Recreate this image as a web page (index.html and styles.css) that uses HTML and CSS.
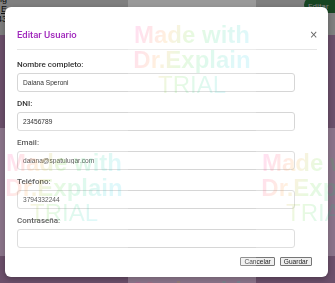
FILE: index.html
```html
<!DOCTYPE html>
<html lang="es">
<head>
    <meta charset="UTF-8">
    <meta name="viewport" content="width=device-width, initial-scale=1.0">
    <title>Editar Usuario</title>
    <link rel="stylesheet" href="styles.css">
</head>
<body>
    <div class="page">
        <div class="topbar">
            <div class="cut">
                <span>ing</span>
                <a href="#">E</a>
                <span>43</span>
            </div>
            <button class="btn-editar">Editar</button>
        </div>
    </div>

    <div class="backdrop">
        <div class="modal">
            <div class="modal-header">
                <h2>Editar Usuario</h2>
                <button class="close">&times;</button>
            </div>
            <form class="modal-body">
                <label for="nombre">Nombre completo:</label>
                <input type="text" id="nombre" value="Daiana Speroni">
                <label for="dni">DNI:</label>
                <input type="text" id="dni" value="23456789">
                <label for="email">Email:</label>
                <input type="text" id="email" value="daiana@spatulugar.com">
                <label for="telefono">Teléfono:</label>
                <input type="text" id="telefono" value="3794332244">
                <label for="password">Contraseña:</label>
                <input type="password" id="password">
            </form>
            <div class="modal-footer">
                <button>Cancelar</button>
                <button>Guardar</button>
            </div>
        </div>
    </div>

    <!-- marca de agua de la version de prueba -->
    <div class="wm wm-a"><div class="wm-text"><b>Made with</b><b>Dr.Explain</b><span>TRIAL</span></div></div>
    <div class="wm wm-b"><div class="wm-text"><b>Made with</b><b>Dr.Explain</b><span>TRIAL</span></div></div>
    <div class="wm wm-c"><div class="wm-text"><b>Made with</b><b>Dr.Explain</b><span>TRIAL</span></div></div>
    <div class="wm wm-d"><div class="wm-text"><b>Made with</b><b>Dr.Explain</b><span>TRIAL</span></div></div>
</body>
</html>
```

FILE: styles.css
```css
html, body {
    margin: 0;
    height: 100%;
    overflow: hidden;
}
body {
    background-color: #d9a0d7;
    font-family: Roboto, Arial, sans-serif;
}
.topbar {
    height: 35px;
    background-color: #fff;
    display: flex;
    justify-content: space-between;
    align-items: flex-start;
}
.cut {
    width: 7px;
    overflow: hidden;
    display: flex;
    flex-direction: column;
    align-items: flex-end;
    margin-top: -6px;
    font-family: "Liberation Sans", Arial, sans-serif;
    font-size: 9px;
    line-height: 10px;
    color: #222;
}
.cut span, .cut a {
    white-space: nowrap;
    color: #222;
}
.btn-editar {
    margin-top: -3px;
    width: 31px;
    height: 16px;
    padding: 3px 0 0 4px;
    border: none;
    border-radius: 8px 0 0 8px;
    background-color: #2f8a45;
    color: #fff;
    font-family: Roboto, sans-serif;
    font-size: 8px;
    line-height: 10px;
    text-align: left;
}

/* fondo oscuro del modal */
.backdrop {
    position: fixed;
    top: 0;
    left: 0;
    right: 0;
    bottom: 0;
    background-color: rgba(0, 0, 0, 0.5);
    padding: 7px 0 0 5px;
}
.modal {
    width: 323px;
    height: 270px;
    background-color: #fff;
    border-radius: 6px;
    box-shadow: 0 2px 6px rgba(0, 0, 0, 0.3);
    display: flex;
    flex-direction: column;
}
.modal-header {
    margin: 0 11px 0 12px;
    padding: 22px 0 8px;
    border-bottom: 1px solid #e6e6e6;
    display: flex;
    justify-content: space-between;
    align-items: center;
}
.modal-header h2 {
    margin: 0;
    font-size: 9.5px;
    line-height: 12px;
    font-weight: 500;
    color: #a028bc;
}
.close {
    border: none;
    background: none;
    padding: 0;
    margin-right: -1px;
    font-family: "DejaVu Sans", sans-serif;
    font-size: 10px;
    line-height: 12px;
    color: #666;
}
.modal-body {
    padding: 10px 0 0 12px;
    display: flex;
    flex-direction: column;
    align-items: flex-start;
}
.modal-body label {
    font-size: 8px;
    line-height: 10px;
    font-weight: 500;
    color: #333;
    margin-bottom: 3px;
}
.modal-body input {
    box-sizing: border-box;
    width: 278px;
    height: 19px;
    margin: 0 0 7px;
    padding: 0 5px;
    border: 1px solid #d6d6d6;
    border-radius: 3px;
    font-family: "Liberation Sans", Arial, sans-serif;
    font-size: 6.6px;
    color: #333;
    outline: none;
}
.modal-footer {
    margin-top: 2px;
    padding-right: 16px;
    display: flex;
    justify-content: flex-end;
    gap: 5px;
}
.modal-footer button {
    height: 9px;
    padding: 0 3px;
    border: 1px solid #767676;
    border-radius: 1px;
    background-color: #efefef;
    font-family: "Liberation Sans", Arial, sans-serif;
    font-size: 6.6px;
    line-height: 7px;
    color: #222;
}

/* marca de agua */
.wm {
    position: fixed;
    width: 128px;
    height: 128px;
    background-color: rgba(255, 255, 255, 0.2);
    pointer-events: none;
}
.wm-a { left: 128px; top: 0; }
.wm-b { left: 0; top: 128px; }
.wm-c { left: 128px; top: 256px; }
.wm-d { left: 256px; top: 128px; }
.wm-text {
    padding-top: 22px;
    display: flex;
    flex-direction: column;
    align-items: center;
    font-family: "Liberation Sans", Arial, sans-serif;
    font-size: 24px;
    line-height: 25px;
    white-space: nowrap;
    background: linear-gradient(110deg, #ff00c0 5%, #ff2060 18%, #ff9000 32%, #50d000 45%, #00d070 62%, #00c8e0 82%);
    -webkit-background-clip: text;
    background-clip: text;
    color: transparent;
    opacity: 0.12;
}
.wm-text span {
    font-weight: 400;
}
```
